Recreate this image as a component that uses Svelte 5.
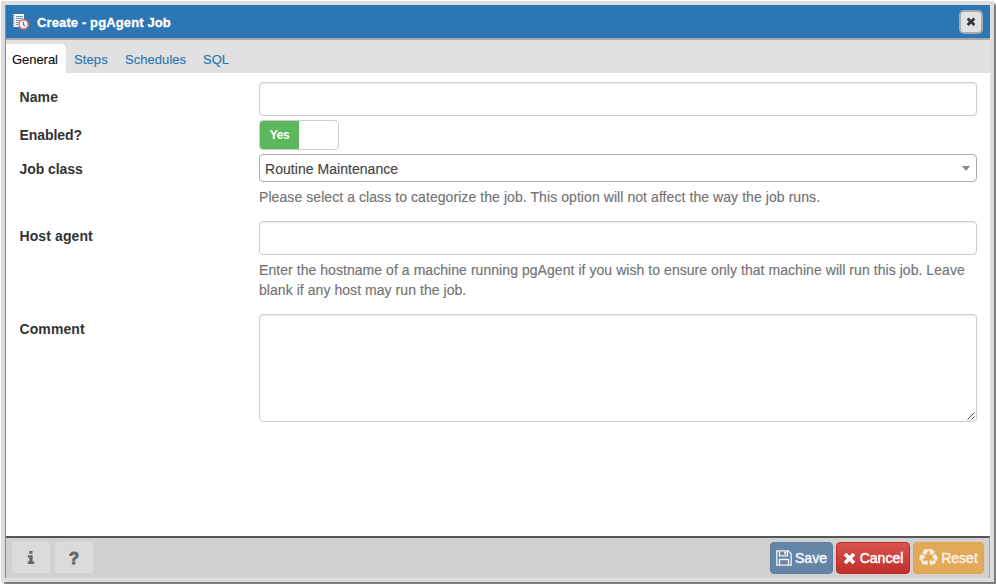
<script>
  const tabs = ['General', 'Steps', 'Schedules', 'SQL'];
</script>

<div class="page">
  <div class="frame">
    <section class="dialog">
      <header>
        <svg class="job" width="18" height="18" viewBox="0 0 18 18">
          <path d="M1 1h11v13H1z" fill="#f5f6f8" />
          <path d="M1 1h2v13H1z" fill="#d8dade" />
          <path d="M1.500 2v12" stroke="#888" stroke-dasharray="1 1" />
          <path d="M4 3.500h7M4 5.500h7M4 7.500h4M4 9.500h2.500M4 11.500h2" stroke="#5577a6" stroke-width=".8" />
          <circle cx="11.600" cy="11.400" r="4.600" fill="#eef5fc" stroke="#e3706c" stroke-width="1.600" />
          <path d="M11.400 8.700v3l1.600 1.300" fill="none" stroke="#4470ad" stroke-width="1.100" />
        </svg>
        <h1>Create - pgAgent Job</h1>
        <button class="close" aria-label="Close">
          <svg width="10" height="10" viewBox="0 0 10 10"><path d="M1.600 1.500l6.800 6.500m0-6.500l-6.800 6.500" stroke="#333" stroke-width="2.700" /></svg>
        </button>
      </header>
      <nav>
        {#each tabs as tab, i}
          <a class="tab {tab.toLowerCase()}" class:active={i === 0}>{tab}</a>
        {/each}
      </nav>
      <main>
        <div class="row name"><span class="label l1">Name</span><div class="input"></div></div>
        <div class="row enabled">
          <span class="label l2">Enabled?</span>
          <div class="switch"><span class="on"><b>Yes</b></span></div>
        </div>
        <div class="row class">
          <span class="label l3">Job class</span>
          <div class="field">
            <div class="select"><span>Routine Maintenance</span><i></i></div>
            <p class="h1">Please select a class to categorize the job. This option will not affect the way the job runs.</p>
          </div>
        </div>
        <div class="row host">
          <span class="label l4">Host agent</span>
          <div class="field">
            <div class="input"></div>
            <p><span class="h2">Enter the hostname of a machine running pgAgent if you wish to ensure only that machine will run this job. Leave</span><br /><span class="h2">blank if any host may run the job.</span></p>
          </div>
        </div>
        <div class="row comment">
          <span class="label l5">Comment</span>
          <div class="area">
            <svg width="8" height="8" viewBox="0 0 8 8"><path d="M.5 7.500l7-7M4.500 7.500l3-3" stroke="#555" stroke-width="1" /></svg>
          </div>
        </div>
      </main>
      <footer>
        <button class="help" aria-label="Info">
          <svg width="8" height="13" viewBox="0 0 8 13"><path d="M2.200 0h3.300v2.800H2.200zM.8 4.200h4.800v6.300h1.600V13H.8v-2.500h1.500V6.600H.8z" fill="#666" /></svg>
        </button>
        <button class="help q">?</button>
        <div class="space"></div>
        <button class="btn save">
          <svg width="16" height="16" viewBox="0 0 16 16" fill="none" stroke="#f1f4f7" stroke-width="1.300"><path d="M.8.8h11.400l3 3v11.400H.8zM3.500.8v5h8v-5M3.500 15V9.500h9V15" /><path d="M8.200 1.500h2v3h-2z" fill="#f1f4f7" stroke="none" /></svg>
          <span>Save</span>
        </button>
        <button class="btn cancel">
          <svg width="13" height="13" viewBox="0 0 13 13"><path d="M2 2l9 9m0-9l-9 9" stroke="#fff" stroke-width="3.800" /></svg>
          <span>Cancel</span>
        </button>
        <button class="btn reset">
          <svg width="19" height="18" viewBox="0 0 1792 1792" preserveAspectRatio="none" fill="#f8eedf"><path d="M836 1169l-15 368-2 22-420-29q-36-3-67-31.500t-47-65.500q-11-27-14.500-55t4-65 12-55 21.500-64 19-53q78 12 509 28zM449 583l180 379-147-92q-63 72-111.500 144.500t-72.500 125-39.500 94.500-18.500 63l-4 21-190-357q-17-26-18-56t6-47l8-18q35-63 114-188l-140-86zm1231 517l-188 359q-12 29-36.500 46.500t-43.500 20.500l-18 4q-71 7-219 12l8 164-230-367 211-362 7 173q170 16 283 5t170-33zM895 176q-47 63-265 435l-317-187-19-12 225-356q20-31 60-45t80-10q24 2 48.500 12t42 21 41.500 33 36 34.500 36 39.500 32 35zm655 307l212 363q18 37 12.500 76t-27.500 74q-13 20-33 37t-38 28-48.500 22-47 16-51.500 14-46 12q-34-72-265-436l313-195zm-143-226l142-83-220 373-419-20 151-86q-34-89-75-166t-75.500-123.500-64.500-80-47-46.500l-17-13 405 1q31-3 58 10.500t39 28.500l11 15q39 61 112 190z" /></svg>
          <span>Reset</span>
        </button>
      </footer>
    </section>
  </div>
</div>

<style>
  :global(body) { margin: 0; background: #fff; }
  * { box-sizing: border-box; }
  .page { width: 996px; height: 584px; padding: 1px 2px 2px 1px; overflow: hidden; font: 14px/20px "Liberation Sans", Arial, sans-serif; color: #333; }
  .frame { width: 993px; height: 581px; padding: 4px; background: #ddd; box-shadow: 3px 3px 2px #777; }
  .dialog { width: 985px; height: 573px; border-left: 1px solid #888; display: flex; flex-direction: column; background: #fff; }
  header { height: 35px; flex: none; display: flex; align-items: center; background: #2c76b4; border-bottom: 2px solid #a9a9a9; padding: 0 7px 0 6px; }
  .job { flex: none; margin-top: 1px; }
  h1 { margin: 2px 0 0 7px; font-size: 13px; line-height: 20px; color: #fff; flex: 1; letter-spacing: .12px; white-space: nowrap; -webkit-text-stroke: .3px #fff; }
  button { font: inherit; margin: 0; padding: 0; display: flex; align-items: center; justify-content: center; }
  .close { width: 24px; height: 24px; border: 2px solid #aaa; border-radius: 5px; background: #e2e2e2; }
  nav { height: 33px; flex: none; background: #e1e1e1; display: flex; align-items: flex-end; }
  .tab { height: 29px; padding: 6px 0 0 6px; font-size: 13px; line-height: 20px; color: #2c76b4; white-space: nowrap; -webkit-text-stroke: .15px; }
  .active { width: 60px; background: #fff; border-radius: 0 5px 0 0; color: #111; letter-spacing: -.05px; }
  .steps { width: 51px; padding-left: 8px; letter-spacing: .12px; }
  .schedules { width: 78px; padding-left: 8px; letter-spacing: .05px; }
  .sql { padding-left: 8px; }
  main { flex: 1; padding: 9px 13px 0 14px; min-height: 0; }
  .row { display: flex; align-items: flex-start; }
  .label { width: 239px; flex: none; padding-top: 5px; font-weight: bold; white-space: nowrap; text-indent: -.5px; }
  .l1, .l4, .l5 { letter-spacing: .1px; }
  .l2, .l3 { letter-spacing: -.06px; }
  .field { flex: 1; }
  .input { flex: 1; height: 34px; border: 1px solid #ccc; border-radius: 4px; box-shadow: inset 0 1px 1px #00000013; }
  .name { height: 38px; }
  .enabled { height: 34px; }
  .switch { width: 80px; height: 30px; border: 1px solid #ccc; border-radius: 4px; overflow: hidden; }
  .on { display: block; width: 39px; height: 28px; background: #5cb85c; color: #fff; font-size: 12px; letter-spacing: -.4px; line-height: 28px; text-align: center; }
  .class { height: 67px; }
  .select { height: 28px; border: 1px solid #aaa; border-radius: 4px; display: flex; align-items: center; justify-content: space-between; padding: 2px 6px 0 5px; color: #444; letter-spacing: .04px; -webkit-text-stroke: .15px; }
  .select i { margin-top: -2px; border: 4px solid transparent; border-top: 5px solid #888; border-bottom: 0; }
  p { margin: 5px 0 0; color: #737373; white-space: nowrap; -webkit-text-stroke: .15px; }
  .h1 { letter-spacing: .072px; }
  .h2 { letter-spacing: .055px; }
  .host { height: 93px; }
  .area { flex: 1; height: 108px; border: 1px solid #ccc; border-radius: 4px; display: flex; align-items: flex-end; justify-content: flex-end; padding: 1px; box-shadow: inset 0 1px 1px #00000013; }
  footer { height: 42px; flex: none; display: flex; align-items: flex-start; border-top: 2px solid #555; border-right: 1px solid #aaa; background: #d1d1d1; padding: 4px 5px 0 6px; }
  .help { width: 38px; height: 31px; border: 1px solid #dedede; border-radius: 3px; background: #dbdbdb; color: #666; }
  .q { margin-left: 5px; padding-top: 2px; font-weight: bold; font-size: 17px; -webkit-text-stroke: .8px #666; }
  .space { flex: 1; }
  .btn { height: 32px; border: 1px solid; border-radius: 4px; color: #fff; font-size: 14px; -webkit-text-stroke: .5px; white-space: nowrap; gap: 3px; }
  .save { width: 63px; background: #6585a6; border-color: #5b7d9f; color: #f1f4f7; }
  .cancel { width: 74px; margin: 0 3px; background: linear-gradient(#d9534f, #c12e2a); border-color: #b92c28; gap: 4px; }
  .reset { width: 71px; background: #e2a959; border-color: #e3a44c; color: #f8eedf; gap: 3px; }
</style>
